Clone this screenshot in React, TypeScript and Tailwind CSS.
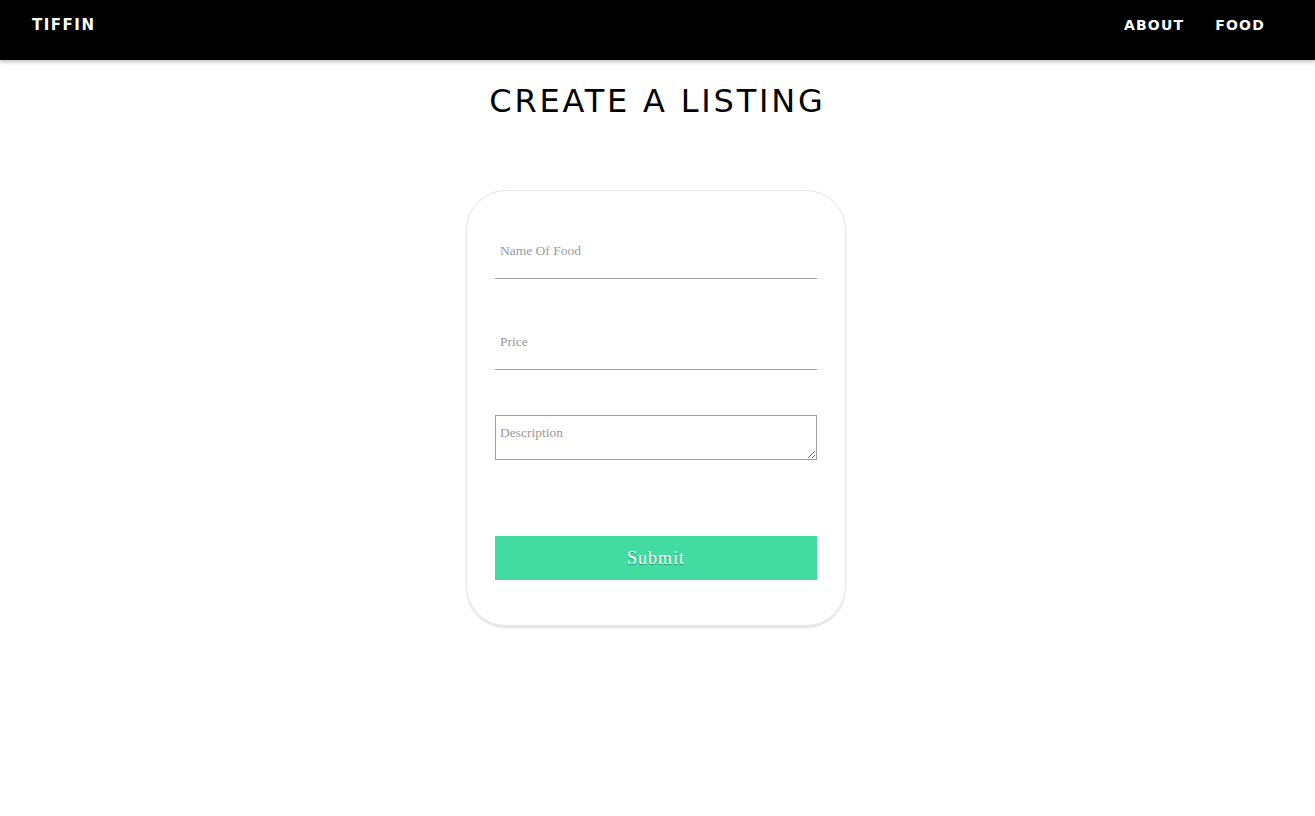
import React from "react";

export default function App() {
    return (
        <div className="min-h-[816px] bg-white">
            <nav className="h-[60px] bg-black flex items-center justify-between pl-[32px] pr-[50px] pb-[9px] shadow-[0_2px_4px_rgba(0,0,0,0.25)]">
                <span className="text-white text-[15px] font-bold tracking-[1.5px] font-['DejaVu_Sans',sans-serif]">TIFFIN</span>
                <div className="flex gap-[31px] text-white text-[14px] font-bold tracking-[1.2px] font-['DejaVu_Sans',sans-serif]">
                    <a>ABOUT</a>
                    <a>FOOD</a>
                </div>
            </nav>

            <h1 className="text-center mt-[23px] text-[32px] tracking-[2.8px] text-black font-medium font-['DejaVu_Sans',sans-serif] leading-[36px]">
                CREATE A LISTING
            </h1>

            <div className="flex justify-center mt-[71px] pr-[3px]">
                <form className="w-[380px] h-[436px] rounded-[40px] border border-[#e6e6e6] shadow-[0_2px_2px_rgba(0,0,0,0.12)] px-[28px] pt-[48px] flex flex-col font-['Liberation_Serif',serif]">
                    <input
                        placeholder="Name Of Food"
                        className="w-full h-[40px] px-[5px] pb-[16px] border-b border-[#a0a0a0] text-[13.5px] outline-none placeholder:text-[#999]"
                    />
                    <input
                        placeholder="Price"
                        className="w-full h-[40px] px-[5px] pb-[16px] mt-[51px] border-b border-[#a0a0a0] text-[13.5px] outline-none placeholder:text-[#999]"
                    />
                    <textarea
                        placeholder="Description"
                        className="w-full h-[45px] mt-[45px] px-[4px] py-[9px] border border-[#a0a0a0] text-[13.5px] leading-[16px] outline-none placeholder:text-[#999]"
                    />
                    <button
                        type="button"
                        className="w-full h-[44px] mt-[76px] bg-[#42dca3] text-white text-[18px] tracking-[1px] [text-shadow:0_1px_1px_rgba(0,0,0,0.35)]"
                    >
                        Submit
                    </button>
                </form>
            </div>
        </div>
    );
}
